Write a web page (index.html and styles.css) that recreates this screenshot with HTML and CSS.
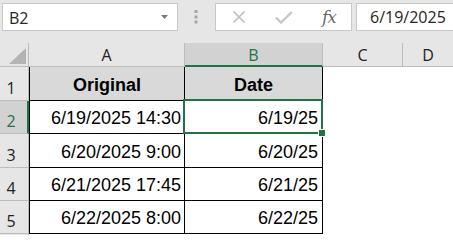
FILE: index.html
```html
<!DOCTYPE html>
<html lang="en">
<head>
<meta charset="utf-8">
<title>Sheet</title>
<link rel="stylesheet" href="styles.css">
</head>
<body>
<div class="app">
  <div class="toolbar">
    <div class="namebox">
      <span class="nb-text">B2</span>
      <svg class="nb-arrow" width="7" height="4" viewBox="0 0 7 4"><polygon points="0,0 7,0 3.5,4" fill="#7a7a7a"/></svg>
    </div>
    <div class="grip">
      <svg width="4" height="14" viewBox="0 0 4 14"><rect x="0.5" y="0" width="3" height="3" fill="#a6a6a6"/><rect x="0.5" y="5.5" width="3" height="3" fill="#a6a6a6"/><rect x="0.5" y="10.5" width="3" height="3" fill="#a6a6a6"/></svg>
    </div>
    <div class="fbtns">
      <span class="fbtn"><svg width="14" height="12" viewBox="0 0 14 12"><path d="M1.5 0.5 L12.5 11.5 M12.5 0.5 L1.5 11.5" stroke="#bfbfbf" stroke-width="1.6" fill="none"/></svg></span>
      <span class="fbtn"><svg width="18" height="13" viewBox="0 0 18 13"><path d="M1 6.5 L6 11.5 L16.8 1" stroke="#c6c6c6" stroke-width="2.4" fill="none"/></svg></span>
      <span class="fbtn fx">fx</span>
    </div>
    <div class="finput">6/19/2025</div>
  </div>
  <div class="sheet">
    <div class="grid">
      <div class="corner"><svg width="17" height="16" viewBox="0 0 17 16"><polygon points="0,16 17,16 17,0" fill="#b4b4b4"/></svg></div>
      <div class="ch ch-a">A</div>
      <div class="ch ch-b sel">B</div>
      <div class="ch ch-c">C</div>
      <div class="ch ch-d">D</div>

      <div class="rh">1</div>
      <div class="c ca head">Original</div>
      <div class="c cb head">Date</div>
      <div class="e"></div>
      <div class="e"></div>

      <div class="rh sel">2</div>
      <div class="c ca">6/19/2025 14:30</div>
      <div class="c cb">6/19/25</div>
      <div class="e"></div>
      <div class="e"></div>

      <div class="rh">3</div>
      <div class="c ca">6/20/2025 9:00</div>
      <div class="c cb">6/20/25</div>
      <div class="e"></div>
      <div class="e"></div>

      <div class="rh">4</div>
      <div class="c ca">6/21/2025 17:45</div>
      <div class="c cb">6/21/25</div>
      <div class="e"></div>
      <div class="e"></div>

      <div class="rh">5</div>
      <div class="c ca">6/22/2025 8:00</div>
      <div class="c cb">6/22/25</div>
      <div class="e"></div>
      <div class="e"></div>

      <div class="rh"></div>
      <div class="e"></div>
      <div class="e"></div>
      <div class="e"></div>
      <div class="e"></div>
    </div>
    <div class="selection"><span class="handle"></span></div>
  </div>
</div>
</body>
</html>
```
FILE: styles.css
```css
* { box-sizing: border-box; }
html, body { margin: 0; padding: 0; }
body {
  width: 453px;
  height: 235px;
  overflow: hidden;
  background: #ffffff;
  font-family: "Open Sans", "Noto Sans", sans-serif;
}
.app { width: 453px; height: 235px; overflow: hidden; }

/* ---------- formula bar ---------- */
.toolbar {
  height: 43px;
  background: #e6e6e6;
  display: flex;
  align-items: flex-start;
  padding: 3px 0 0 2px;
}
.namebox {
  width: 176px;
  height: 28px;
  background: #fff;
  border: 1px solid #c8c8c8;
  display: flex;
  align-items: center;
  padding: 2px 9px 0 6px;
}
.nb-text {
  font-size: 16px;
  color: #262626;
  line-height: 18px;
}
.nb-arrow { margin-left: auto; margin-top: -2px; }
.grip {
  width: 37px;
  height: 28px;
  display: flex;
  justify-content: center;
  padding: 7px 2px 0 0;
}
.fbtns {
  width: 137px;
  height: 28px;
  background: #fff;
  border: 1px solid #c8c8c8;
  display: flex;
  align-items: center;
}
.fbtn {
  width: 45px;
  height: 26px;
  display: flex;
  align-items: center;
  justify-content: center;
}
.fx {
  font-family: "DejaVu Serif", "Liberation Serif", serif;
  font-style: italic;
  font-size: 17px;
  color: #6a6a6a;
  letter-spacing: -1px;
  padding-left: 1px;
}
.finput {
  flex: 1;
  height: 28px;
  margin-left: 4px;
  margin-right: -4px;
  background: #fff;
  border: 1px solid #c8c8c8;
  font-size: 16px;
  color: #262626;
  line-height: 20px;
  padding: 3px 0 0 13px;
}

/* ---------- sheet ---------- */
.sheet { position: relative; }
.grid {
  display: grid;
  grid-template-columns: 29px 156px 138px 80px 1fr;
  grid-template-rows: 24px 34px 33px 34px 33px 33px 20px;
}
.corner {
  background: #e6e6e6;
  border-right: 1px solid #bcbcbc;
  border-bottom: 1px solid #bcbcbc;
  display: flex;
  align-items: flex-end;
  justify-content: flex-end;
  padding: 0 2px 2px 0;
}
.ch {
  background: #e6e6e6;
  border-right: 1px solid #bcbcbc;
  border-bottom: 1px solid #bcbcbc;
  display: flex;
  align-items: flex-end;
  justify-content: center;
  font-size: 16px;
  line-height: 20px;
  color: #222;
  padding-bottom: 1px;
}
.ch-d { border-right: none; }
.ch.sel {
  background: #d2d2d2;
  color: #217346;
  border-bottom: 2px solid #217346;
  padding-bottom: 0;
}
.rh {
  background: #e6e6e6;
  border-right: 1px solid #bcbcbc;
  border-bottom: 1px solid #bcbcbc;
  display: flex;
  align-items: flex-end;
  justify-content: center;
  font-size: 16px;
  line-height: 20px;
  color: #222;
  padding: 0 6px 2px 0;
}
.rh.sel {
  background: #d2d2d2;
  color: #217346;
  border-right: 2px solid #217346;
  padding-right: 5px;
}
.c {
  border-right: 1px solid #000;
  border-bottom: 1px solid #000;
  display: flex;
  align-items: flex-end;
  justify-content: flex-end;
  font-family: "Liberation Sans", Arial, sans-serif;
  font-size: 18px;
  line-height: 20px;
  color: #000;
  padding: 0 3px 5px 0;
  white-space: nowrap;
}
.ca { border-left: 1px solid #000; }
.cb { padding-right: 4px; }
.c.head {
  background: #d9d9d9;
  font-weight: bold;
  justify-content: center;
  padding-right: 0;
}
.e { background: #fff; }

.selection {
  position: absolute;
  left: 183px;
  top: 56px;
  width: 140px;
  height: 35px;
  border: 2px solid #217346;
  pointer-events: none;
}
.handle {
  position: absolute;
  right: -4px;
  bottom: -4px;
  width: 6px;
  height: 6px;
  background: #217346;
  box-shadow: 0 0 0 1px #fff;
}
```
